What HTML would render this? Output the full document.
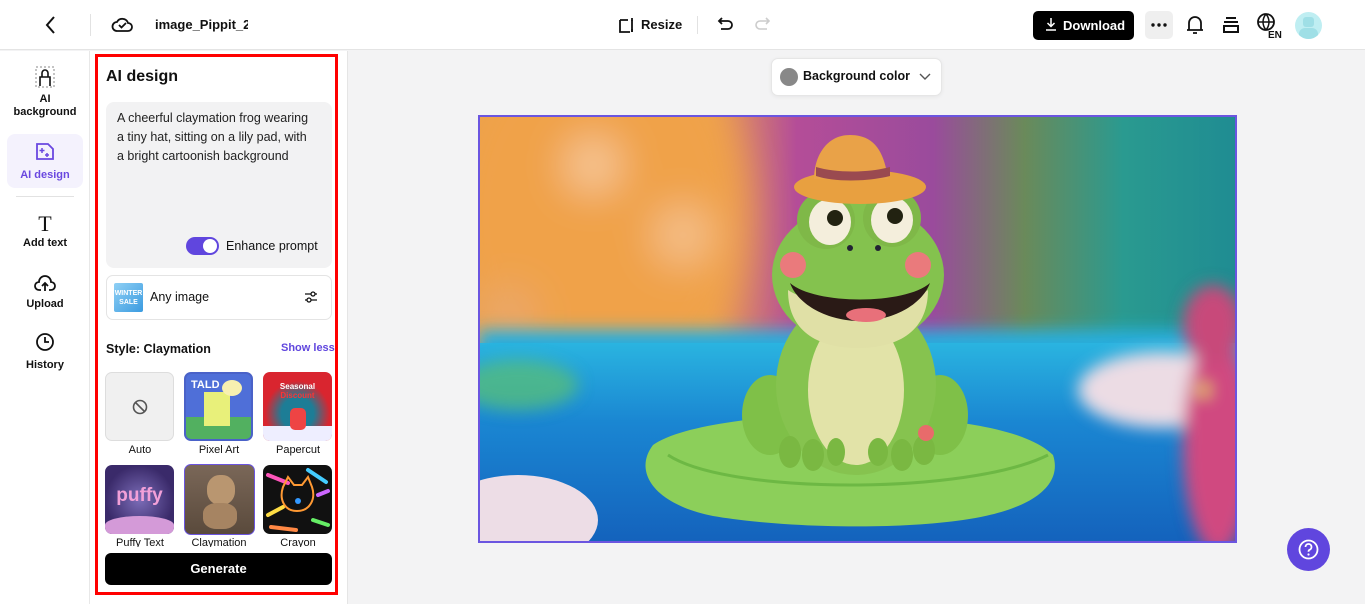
<!DOCTYPE html>
<html><head><meta charset="utf-8"><style>
*{box-sizing:border-box;margin:0;padding:0}
html,body{width:1365px;height:604px;overflow:hidden}
body{background:#f3f3f4;font-family:"Liberation Sans",sans-serif;color:#111;position:relative}
.top{position:absolute;left:0;top:0;width:1365px;height:50px;background:#fff;border-bottom:1px solid #e4e4e4}
.abs{position:absolute}
.side{position:absolute;left:0;top:51px;width:90px;height:553px;background:#fff;border-right:1px solid #e8e8e8}
.panel{position:absolute;left:90px;top:51px;width:258px;height:553px;background:#fff;border-right:1px solid #e5e5e5;overflow:hidden}
.red{position:absolute;left:95px;top:54px;width:243px;height:541px;border:3px solid #f00}
.navi{position:absolute;width:90px;text-align:center;font-size:11px;font-weight:bold;line-height:13px}
.b{font-weight:bold}
.th{position:absolute;width:69px;height:69px;border-radius:7px;overflow:hidden}
.lbl{position:absolute;width:80px;text-align:center;font-size:11px}
</style></head><body>
<div class="top">
 <svg class="abs" style="left:42px;top:15px" width="18" height="20" viewBox="0 0 18 20"><path d="M12 2L5 10l7 8" fill="none" stroke="#111" stroke-width="2"/></svg>
 <div class="abs" style="left:90px;top:14px;width:1px;height:22px;background:#e2e2e2"></div>
 <svg class="abs" style="left:111px;top:14px" width="22" height="20" viewBox="0 0 22 20"><path d="M6 17h11a4 4 0 0 0 0-8 6 6 0 0 0-11-1A4.5 4.5 0 0 0 6 17z" fill="none" stroke="#111" stroke-width="1.8"/><path d="M8 11l2.5 2.5L15 9" fill="none" stroke="#111" stroke-width="1.8"/></svg>
 <div class="abs b" style="left:155px;top:17px;font-size:13px;width:93px;overflow:hidden;white-space:nowrap">image_Pippit_20</div>
 <svg class="abs" style="left:617px;top:16px" width="18" height="18" viewBox="0 0 18 18"><path d="M3 4v12h10M15 4v12M3 4h8" fill="none" stroke="#111" stroke-width="1.8"/><path d="M15 2v3M15 13v3" stroke="#111" stroke-width="1.8"/></svg>
 <div class="abs b" style="left:641px;top:17px;font-size:13px">Resize</div>
 <div class="abs" style="left:697px;top:16px;width:1px;height:18px;background:#e2e2e2"></div>
 <svg class="abs" style="left:717px;top:15px" width="18" height="18" viewBox="0 0 18 18"><path d="M5 3L2 6l3 3M2 6h9a4 4 0 0 1 0 8H4" fill="none" stroke="#111" stroke-width="1.8"/></svg>
 <svg class="abs" style="left:753px;top:15px" width="18" height="18" viewBox="0 0 18 18"><path d="M13 3l3 3-3 3M16 6H7a4 4 0 0 0 0 8h7" fill="none" stroke="#ccc" stroke-width="1.6"/></svg>
 <div class="abs" style="left:1033px;top:11px;width:101px;height:29px;background:#000;border-radius:5px;color:#fff;font-size:13px;font-weight:bold;line-height:29px;padding-left:30px">Download</div>
 <svg class="abs" style="left:1045px;top:17px" width="12" height="14" viewBox="0 0 12 14"><path d="M6 1v8M2.5 6L6 9.5 9.5 6M1 13h10" fill="none" stroke="#fff" stroke-width="1.5"/></svg>
 <div class="abs" style="left:1145px;top:11px;width:28px;height:28px;background:#efefef;border-radius:5px"><svg width="28" height="28" viewBox="0 0 28 28"><circle cx="8" cy="14" r="1.7" fill="#111"/><circle cx="14" cy="14" r="1.7" fill="#111"/><circle cx="20" cy="14" r="1.7" fill="#111"/></svg></div>
 <svg class="abs" style="left:1185px;top:14px" width="20" height="22" viewBox="0 0 20 22"><path d="M4 16V9a6 6 0 0 1 12 0v7M2 16h16M8 19h4" fill="none" stroke="#111" stroke-width="1.8"/></svg>
 <svg class="abs" style="left:1221px;top:15px" width="20" height="20" viewBox="0 0 20 20"><path d="M5 3h10M3 7h14M3 11h14v6H3z" fill="none" stroke="#111" stroke-width="2"/></svg>
 <svg class="abs" style="left:1256px;top:12px" width="28" height="28" viewBox="0 0 28 28"><circle cx="10" cy="10" r="8" fill="none" stroke="#111" stroke-width="1.8"/><path d="M2 10h16M10 2c-4 5-4 11 0 16M10 2c4 5 4 11 0 16" fill="none" stroke="#111" stroke-width="1.5"/><text x="12" y="26" font-size="10" font-weight="bold" font-family="Liberation Sans" fill="#111">EN</text></svg>
 <div class="abs" style="left:1295px;top:12px;width:27px;height:27px;border-radius:50%;background:#bfeef2;overflow:hidden"><div style="position:absolute;left:8px;top:5px;width:11px;height:10px;background:#9fdfe6;border-radius:3px"></div><div style="position:absolute;left:4px;top:16px;width:19px;height:12px;background:#9fdfe6;border-radius:6px 6px 0 0"></div></div>
</div>

<div class="side">
 <svg class="abs" style="left:35px;top:15px" width="20" height="22" viewBox="0 0 20 22"><rect x="1" y="1" width="18" height="20" fill="none" stroke="#888" stroke-dasharray="2 2"/><path d="M5 20V11h10v9M7 11V7a3 3 0 0 1 6 0v4" fill="none" stroke="#111" stroke-width="1.6"/></svg>
 <div class="navi" style="top:42px">AI<br>background</div>
 <div class="abs" style="left:7px;top:83px;width:76px;height:54px;background:#f4f2fd;border-radius:8px"></div>
 <svg class="abs" style="left:35px;top:91px" width="20" height="19" viewBox="0 0 20 19"><path d="M2 2h11l5 5v10H2z" fill="none" stroke="#6a48e0" stroke-width="1.8"/><path d="M7 6v5M4.5 8.5h5M12 11v4M10 13h4" stroke="#6a48e0" stroke-width="1.5"/></svg>
 <div class="navi" style="top:118px;color:#6a48e0">AI design</div>
 <div class="abs" style="left:16px;top:145px;width:58px;height:1px;background:#e2e2e2"></div>
 <div class="abs" style="left:35px;top:160px;font-size:22px;font-family:'Liberation Serif',serif;width:20px;text-align:center">T</div>
 <div class="navi" style="top:186px">Add text</div>
 <svg class="abs" style="left:33px;top:222px" width="24" height="20" viewBox="0 0 24 20"><path d="M8 17H6a4 4 0 0 1 0-8 6 6 0 0 1 12 0 4 4 0 0 1 0 8h-2M12 18v-8M9 13l3-3 3 3" fill="none" stroke="#111" stroke-width="1.8"/></svg>
 <div class="navi" style="top:247px">Upload</div>
 <svg class="abs" style="left:35px;top:281px" width="20" height="20" viewBox="0 0 20 20"><circle cx="10" cy="10" r="8" fill="none" stroke="#111" stroke-width="1.8"/><path d="M10 5v5h4" fill="none" stroke="#111" stroke-width="1.8"/></svg>
 <div class="navi" style="top:308px">History</div>
</div>

<div class="panel">
 <div class="abs b" style="left:16px;top:17px;font-size:16px">AI design</div>
 <div class="abs" style="left:16px;top:51px;width:226px;height:166px;background:#f2f2f3;border-radius:8px"></div>
 <div class="abs" style="left:27px;top:58px;width:215px;font-size:12.5px;line-height:19px;color:#222;white-space:nowrap">A cheerful claymation frog wearing<br>a tiny hat, sitting on a lily pad, with<br>a bright cartoonish background</div>
 <div class="abs" style="left:96px;top:186px;width:33px;height:18px;background:#6046de;border-radius:9px"><div style="position:absolute;right:2px;top:2px;width:14px;height:14px;border-radius:50%;background:#fff"></div></div>
 <div class="abs" style="left:136px;top:188px;font-size:12.5px">Enhance prompt</div>
 <div class="abs" style="left:16px;top:224px;width:226px;height:45px;border:1px solid #e4e4e4;border-radius:7px"></div>
 <div class="abs" style="left:24px;top:232px;width:29px;height:29px;background:linear-gradient(135deg,#8fd0f5,#3b9be0);border-radius:2px;font-size:7px;color:#fff;text-align:center;line-height:9px;padding-top:6px;font-weight:bold">WINTER<br>SALE</div>
 <div class="abs" style="left:60px;top:239px;font-size:12.5px">Any image</div>
 <svg class="abs" style="left:214px;top:239px" width="14" height="14" viewBox="0 0 14 14"><path d="M1 4h12M1 10h12" stroke="#111" stroke-width="1.3"/><circle cx="9" cy="4" r="2" fill="#fff" stroke="#111" stroke-width="1.3"/><circle cx="5" cy="10" r="2" fill="#fff" stroke="#111" stroke-width="1.3"/></svg>
 <div class="abs b" style="left:16px;top:291px;font-size:12.5px">Style: Claymation</div>
 <div class="abs b" style="left:191px;top:291px;font-size:11px;color:#6046de">Show less</div>
 <div class="th" style="left:15px;top:321px;background:#f0f0f0;border:1px solid #ddd"><svg style="position:absolute;left:26px;top:26px" width="16" height="16" viewBox="0 0 16 16"><circle cx="8" cy="8" r="6.5" fill="none" stroke="#555" stroke-width="1.6"/><path d="M3.5 3.5l9 9" stroke="#555" stroke-width="1.6"/></svg></div>
 <div class="th" style="left:94px;top:321px;background:#4f6fd8;border:2px solid #4a62c8"><div style="position:absolute;left:0;bottom:0;width:100%;height:22px;background:#52b060"></div><div style="position:absolute;left:18px;top:18px;width:26px;height:34px;background:#e8f07a"></div><div style="position:absolute;left:36px;top:6px;width:20px;height:16px;background:#f7f0b0;border-radius:50%"></div><div style="position:absolute;left:5px;top:5px;color:#fff;font-size:11px;font-weight:bold">TALD</div></div>
 <div class="th" style="left:173px;top:321px;background:radial-gradient(circle at 50% 60%,#1d7d96 30%,#d9252f 60%);"><div style="position:absolute;left:0;top:10px;width:100%;text-align:center;color:#fff;font-size:8px;font-weight:bold">Seasonal<br><span style="color:#f33">Discount</span></div><div style="position:absolute;left:0;bottom:0;width:100%;height:15px;background:#eef"></div><div style="position:absolute;left:27px;top:36px;width:16px;height:22px;background:#e44;border-radius:5px"></div></div>
 <div class="lbl" style="left:10px;top:393px">Auto</div>
 <div class="lbl" style="left:89px;top:393px">Pixel Art</div>
 <div class="lbl" style="left:168px;top:393px">Papercut</div>
 <div class="th" style="left:15px;top:414px;background:radial-gradient(circle at 50% 50%,#7c6db8,#3a2a6a 70%)"><div style="position:absolute;left:0;top:20px;width:100%;text-align:center;color:#f2a0d8;font-size:19px;font-weight:bold">puffy</div><div style="position:absolute;left:0;bottom:0;width:100%;height:18px;background:#d49ad8;border-radius:50% 50% 0 0"></div></div>
 <div class="th" style="left:94px;top:413px;width:71px;height:71px;border:1.5px solid #6b55e0;background:linear-gradient(#7a6758,#5a4a3c)"><div style="position:absolute;left:22px;top:10px;width:28px;height:30px;background:#b99670;border-radius:45%"></div><div style="position:absolute;left:18px;top:38px;width:34px;height:26px;background:#a68462;border-radius:40%"></div></div>
 <div class="th" style="left:173px;top:414px;background:#111"><svg width="69" height="69" viewBox="0 0 69 69"><g stroke-width="4" stroke-linecap="round"><path d="M5 10l20 8" stroke="#f5b"/><path d="M45 5l18 12" stroke="#4cf"/><path d="M5 50l15 -8" stroke="#fd4"/><path d="M50 55l15 5" stroke="#6e6"/><path d="M8 62l25 3" stroke="#f84"/><path d="M55 30l10 -4" stroke="#c6f"/></g><path d="M20 22l5-10 6 8h8l6-8 4 10c4 12-2 24-15 24s-18-12-14-24z" fill="none" stroke="#f93" stroke-width="2"/><circle cx="35" cy="36" r="3" fill="#39f"/></svg></div>
 <div class="abs" style="left:10px;top:486px;width:240px;height:10px;overflow:hidden"><div class="lbl" style="left:0;top:0">Puffy Text</div><div class="lbl" style="left:79px;top:0">Claymation</div><div class="lbl" style="left:158px;top:0">Crayon</div></div>
 <div class="abs b" style="left:15px;top:502px;width:227px;height:32px;background:#000;border-radius:6px;color:#fff;font-size:13px;text-align:center;line-height:32px">Generate</div>
</div>
<div class="red"></div>

<div class="abs" style="left:771px;top:58px;width:171px;height:38px;background:#fff;border:1px solid #e6e6e6;border-radius:7px;box-shadow:0 1px 4px rgba(0,0,0,.06)"></div>
<div class="abs" style="left:780px;top:68px;width:18px;height:18px;border-radius:50%;background:#888"></div>
<div class="abs b" style="left:803px;top:69px;font-size:12.5px">Background color</div>
<svg class="abs" style="left:919px;top:71px" width="12" height="10" viewBox="0 0 12 10"><path d="M1 3l5 5 5-5" fill="none" stroke="#555" stroke-width="1.4"/></svg>

<svg class="abs" style="left:478px;top:115px" width="759" height="428" viewBox="0 0 759 428">
<defs>
<filter id="bl" x="-30%" y="-30%" width="160%" height="160%"><feGaussianBlur stdDeviation="20"/></filter>
<filter id="bl2" x="-30%" y="-30%" width="160%" height="160%"><feGaussianBlur stdDeviation="8"/></filter>
<linearGradient id="bg" x1="0" x2="1"><stop offset="0" stop-color="#e8a04c"/><stop offset=".3" stop-color="#eba152"/><stop offset=".42" stop-color="#b44d98"/><stop offset=".6" stop-color="#9a4b9c"/><stop offset=".72" stop-color="#6a8a5a"/><stop offset=".85" stop-color="#2a9a90"/><stop offset="1" stop-color="#1f8c92"/></linearGradient>
<linearGradient id="wat" x1="0" y1="0" x2="0" y2="1"><stop offset="0" stop-color="#2ab4e0"/><stop offset=".4" stop-color="#1a86d2"/><stop offset="1" stop-color="#1462bc"/></linearGradient>
</defs>
<rect width="759" height="428" fill="url(#bg)"/>
<g filter="url(#bl)">
<ellipse cx="120" cy="100" rx="150" ry="190" fill="#f0a24a"/>
<circle cx="115" cy="50" r="28" fill="#f6c898"/>
<circle cx="205" cy="120" r="30" fill="#f4c08a"/>
<circle cx="30" cy="200" r="30" fill="#eaa86a"/>
</g>
<rect x="0" y="215" width="759" height="213" fill="url(#wat)" filter="url(#bl2)"/>
<rect x="0" y="228" width="759" height="200" fill="url(#wat)"/>
<g filter="url(#bl2)">
<ellipse cx="40" cy="270" rx="60" ry="25" fill="#5cc070" opacity=".7"/>
<ellipse cx="685" cy="275" rx="85" ry="38" fill="#ecdce4"/>
<ellipse cx="740" cy="330" rx="35" ry="110" fill="#d04a80"/>
<ellipse cx="735" cy="210" rx="30" ry="40" fill="#c84a7a"/>
<circle cx="725" cy="275" r="6" fill="#f2e84a"/>
</g>
<ellipse cx="40" cy="405" rx="80" ry="45" fill="#eddde6"/>
<path d="M175 330c30-22 130-32 200-30 80 2 170 10 200 40 10 30-20 55-90 65-70 10-180 8-250-4-60-12-80-45-60-71z" fill="#8ccf5a"/>
<path d="M190 340c60 40 300 40 380 0" fill="none" stroke="#6db844" stroke-width="3"/>
<ellipse cx="292" cy="300" rx="28" ry="40" fill="#7fc048"/>
<ellipse cx="462" cy="300" rx="28" ry="40" fill="#7fc048"/>
<ellipse cx="378" cy="270" rx="80" ry="90" fill="#86c34f"/>
<ellipse cx="378" cy="275" rx="48" ry="75" fill="#e2e3a8"/>
<g fill="#7ab842"><ellipse cx="312" cy="337" rx="11" ry="16"/><ellipse cx="335" cy="340" rx="11" ry="16"/><ellipse cx="358" cy="337" rx="9" ry="14"/><ellipse cx="400" cy="337" rx="10" ry="14"/><ellipse cx="424" cy="340" rx="11" ry="16"/><ellipse cx="446" cy="335" rx="11" ry="15"/></g>
<circle cx="448" cy="318" r="8" fill="#e86b6b"/>
<ellipse cx="380" cy="160" rx="86" ry="72" fill="#84c24e"/>
<path d="M310 175c25 18 115 18 140 0 0 45-35 58-70 58s-70-13-70-58z" fill="#e0e0a6"/>
<path d="M312 168c25 22 115 22 140 0-8 22-38 38-70 38s-62-16-70-38z" fill="#2a1a16"/>
<ellipse cx="388" cy="200" rx="20" ry="7" fill="#e8707a"/>
<circle cx="315" cy="150" r="13" fill="#ea7a7c"/>
<circle cx="440" cy="150" r="13" fill="#ea7a7c"/>
<circle cx="372" cy="133" r="3" fill="#223"/><circle cx="400" cy="133" r="3" fill="#223"/>
<ellipse cx="348" cy="105" rx="29" ry="29" fill="#7fb848"/>
<ellipse cx="414" cy="103" rx="29" ry="29" fill="#7fb848"/>
<ellipse cx="352" cy="107" rx="21" ry="23" fill="#f4eedc"/>
<ellipse cx="414" cy="105" rx="21" ry="23" fill="#f4eedc"/>
<circle cx="357" cy="103" r="8" fill="#221"/><circle cx="417" cy="101" r="8" fill="#221"/>
<ellipse cx="382" cy="72" rx="66" ry="17" fill="#e8a040"/>
<path d="M336 64c0-22 12-44 36-44s34 16 38 44z" fill="#e9a248"/>
<path d="M338 52c20 6 52 6 74 0v9c-24 6-56 6-74 0z" fill="#9a4a50"/>
</svg>
<div class="abs" style="left:478px;top:115px;width:759px;height:428px;border:2px solid #6b55e0"></div>

<div class="abs" style="left:1287px;top:528px;width:43px;height:43px;border-radius:50%;background:#6046de"></div>
<svg class="abs" style="left:1298px;top:539px" width="21" height="21" viewBox="0 0 21 21"><circle cx="10.5" cy="10.5" r="9" fill="none" stroke="#fff" stroke-width="1.8"/><path d="M7.5 8a3 3 0 1 1 4 2.8c-.8.4-1 1-1 2" fill="none" stroke="#fff" stroke-width="1.8"/><circle cx="10.5" cy="15.5" r="1.1" fill="#fff"/></svg>
</body></html>
